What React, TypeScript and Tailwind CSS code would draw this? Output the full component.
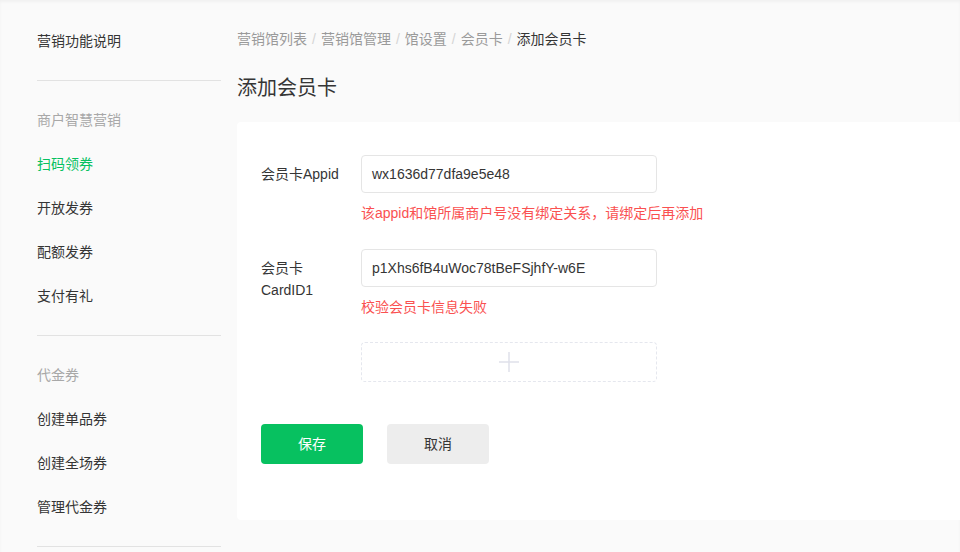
import React from 'react';

const font = { fontFamily: '"Liberation Sans", "Noto Sans CJK SC", sans-serif' };

type NavItem = { label: string; active?: boolean };

const groups: { title?: string; items: NavItem[] }[] = [
    { items: [{ label: '营销功能说明' }] },
    {
        title: '商户智慧营销',
        items: [{ label: '扫码领券', active: true }, { label: '开放发券' }, { label: '配额发券' }, { label: '支付有礼' }],
    },
    {
        title: '代金券',
        items: [{ label: '创建单品券' }, { label: '创建全场券' }, { label: '管理代金券' }],
    },
];

const crumbs = ['营销馆列表', '营销馆管理', '馆设置', '会员卡', '添加会员卡'];

const Sidebar: React.FC = () => (
    <aside className="w-[237px] shrink-0 pl-[37px] pt-[19px]">
        <div className="w-[184px]">
            {groups.map((g, gi) => (
                <div key={gi}>
                    {gi > 0 && <div className="h-px bg-[#e2e2e2] my-[17px]" />}
                    {g.title && (
                        <div className="h-11 flex items-center text-[14px] text-[#a8a8a8]">{g.title}</div>
                    )}
                    {g.items.map((it) => (
                        <div
                            key={it.label}
                            className={`h-11 flex items-center text-[14px] ${it.active ? 'text-[#07c160]' : 'text-[#353535]'}`}
                        >
                            {it.label}
                        </div>
                    ))}
                </div>
            ))}
            <div className="h-px bg-[#e2e2e2] mt-[17px]" />
        </div>
    </aside>
);

const FormRow: React.FC<{ label: React.ReactNode; value: string; error: string }> = ({ label, value, error }) => (
    <div className="flex mb-[26px]">
        <div className="w-[80px] mr-[20px] pt-[8px] text-[14px] leading-[22px] text-[#353535]">{label}</div>
        <div>
            <div className="w-[296px] h-[38px] border border-[#e5e5e5] rounded-[4px] px-[10px] flex items-center text-[14px] text-[#353535]">
                {value}
            </div>
            <div className="mt-[10px] text-[14px] leading-[20px] text-[#fa5151] whitespace-nowrap">{error}</div>
        </div>
    </div>
);

export default function App() {
    return (
        <div
            className="w-[960px] h-[552px] overflow-hidden bg-[#fafafa] flex shadow-[inset_0_2px_3px_rgba(0,0,0,0.04)]"
            style={font}
        >
            <Sidebar />
            <main className="flex-1 pt-[29px]">
                <nav className="flex items-center text-[14px] leading-[20px] text-[#9a9a9a]">
                    {crumbs.map((c, i) => (
                        <React.Fragment key={c}>
                            {i > 0 && <span className="mx-[5px] text-[#d5d5d5]">/</span>}
                            <span className={i === crumbs.length - 1 ? 'text-[#353535]' : ''}>{c}</span>
                        </React.Fragment>
                    ))}
                </nav>
                <h1 className="mt-[25px] mb-[20px] text-[20px] leading-[28px] text-[#353535] font-normal">添加会员卡</h1>
                <section className="w-[800px] bg-white rounded-[4px] pl-[24px] pt-[33px] pb-[56px]">
                    <FormRow label="会员卡Appid" value="wx1636d77dfa9e5e48" error="该appid和馆所属商户号没有绑定关系，请绑定后再添加" />
                    <FormRow
                        label={<>会员卡<br />CardID1</>}
                        value="p1Xhs6fB4uWoc78tBeFSjhfY-w6E"
                        error="校验会员卡信息失败"
                    />
                    <div className="ml-[100px] w-[296px] h-[40px] border border-dashed border-[#e5e7ee] rounded-[4px] flex items-center justify-center -mt-px">
                        <svg width="22" height="22" viewBox="0 0 22 22" fill="none" stroke="#e0e1ea" strokeWidth="1.5">
                            <path d="M11 1v20M1 11h20" />
                        </svg>
                    </div>
                    <div className="flex gap-[24px] mt-[42px]">
                        <button className="w-[102px] h-[40px] rounded-[4px] bg-[#07c160] text-white text-[14px]">保存</button>
                        <button className="w-[102px] h-[40px] rounded-[4px] bg-[#ededed] text-[#353535] text-[14px]">取消</button>
                    </div>
                </section>
            </main>
        </div>
    );
}
